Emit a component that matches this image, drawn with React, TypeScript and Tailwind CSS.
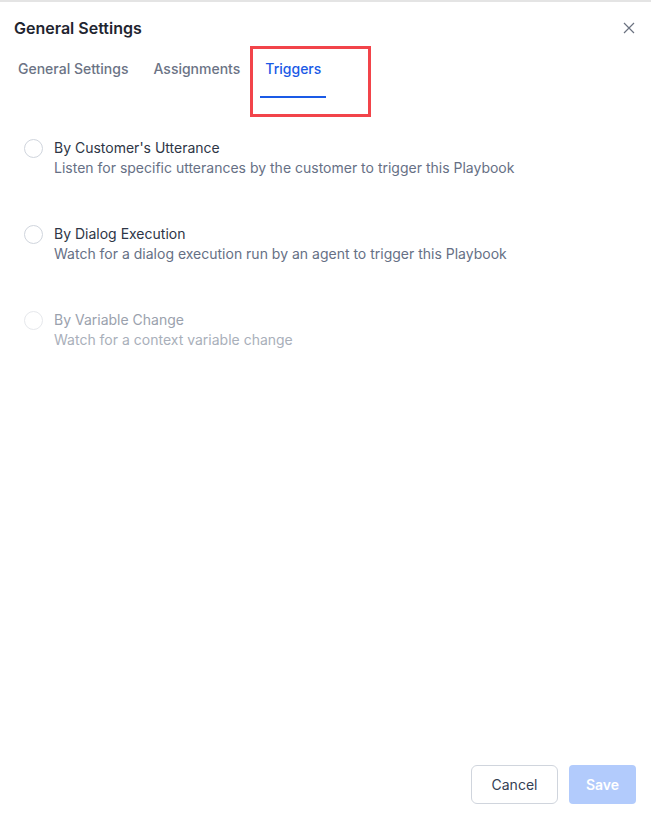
import React, { useState } from 'react';

const triggers = [
  {
    id: 'utterance',
    title: "By Customer's Utterance",
    description: 'Listen for specific utterances by the customer to trigger this Playbook',
    disabled: false,
  },
  {
    id: 'dialog',
    title: 'By Dialog Execution',
    description: 'Watch for a dialog execution run by an agent to trigger this Playbook',
    disabled: false,
  },
  {
    id: 'variable',
    title: 'By Variable Change',
    description: 'Watch for a context variable change',
    disabled: true,
  },
];

const tabs = ['General Settings', 'Assignments', 'Triggers'];

export default function App() {
  const [active] = useState('Triggers');
  const [selected, setSelected] = useState<string | null>(null);

  return (
    <div
      className="h-[816px] w-[651px] bg-white flex flex-col border-t-2 border-[#e4e4e4] text-[#1f2937]"
      style={{ fontFamily: 'Inter, "Noto Sans", sans-serif' }}
    >
      {/* header */}
      <div className="flex items-center justify-between pl-[14px] pr-[16px] pt-[15px]">
        <h2 className="text-[16px] leading-[22px] font-semibold text-[#1f2530]">General Settings</h2>
        <button type="button" aria-label="Close" className="text-[#6b7280]">
          <svg width="12" height="12" viewBox="0 0 12 12" fill="none" stroke="currentColor" strokeWidth="1.2">
            <path d="M1 1l10 10M11 1L1 11" />
          </svg>
        </button>
      </div>

      {/* tabs */}
      <div className="relative flex gap-[15px] pl-[13px] mt-[18px]">
        {tabs.map((t) => (
          <button
            key={t}
            type="button"
            className={
              t === active
                ? 'px-[5px] pt-[2px] pb-[17px] text-[14px] leading-[20px] font-medium text-[#1a5ae6] border-b-2 border-[#1a5ae6]'
                : 'px-[5px] pt-[2px] pb-[17px] text-[14px] leading-[20px] font-medium text-[#6b7385] border-b-2 border-transparent'
            }
          >
            {t}
          </button>
        ))}
        <div className="absolute left-[250px] top-[-11px] w-[121px] h-[71px] border-[3px] border-[#f2444a] pointer-events-none" />
      </div>

      {/* triggers */}
      <div className="flex flex-col gap-[46px] pl-[24px] pt-[40px]">
        {triggers.map((tr) => (
          <label key={tr.id} className="flex items-start gap-[11px] cursor-pointer">
            <span
              onClick={() => !tr.disabled && setSelected(tr.id)}
              className={
                tr.disabled
                  ? 'mt-[1px] w-[19px] h-[19px] rounded-full border border-[#e6e8ec] bg-white shrink-0'
                  : selected === tr.id
                  ? 'mt-[1px] w-[19px] h-[19px] rounded-full border-[5px] border-[#1a5ae6] bg-white shrink-0'
                  : 'mt-[1px] w-[19px] h-[19px] rounded-full border border-[#d0d5dd] bg-white shrink-0'
              }
            />
            <span className="flex flex-col">
              <span className={tr.disabled ? 'text-[14px] leading-[20px] text-[#9aa1ad]' : 'text-[14px] leading-[20px] text-[#2e3646]'}>
                {tr.title}
              </span>
              <span className={tr.disabled ? 'text-[14px] leading-[20px] text-[#a9afba]' : 'text-[14px] leading-[20px] text-[#667085]'}>
                {tr.description}
              </span>
            </span>
          </label>
        ))}
      </div>

      {/* footer */}
      <div className="mt-auto flex justify-end gap-[11px] pr-[15px] pb-[12px]">
        <button
          type="button"
          className="w-[87px] h-[39px] rounded-[6px] border border-[#d0d5dd] bg-white text-[14px] text-[#344054]"
        >
          Cancel
        </button>
        <button
          type="button"
          disabled
          className="w-[67px] h-[39px] rounded-[4px] bg-[#b2cbfc] text-[14px] font-semibold text-white"
        >
          Save
        </button>
      </div>
    </div>
  );
}
